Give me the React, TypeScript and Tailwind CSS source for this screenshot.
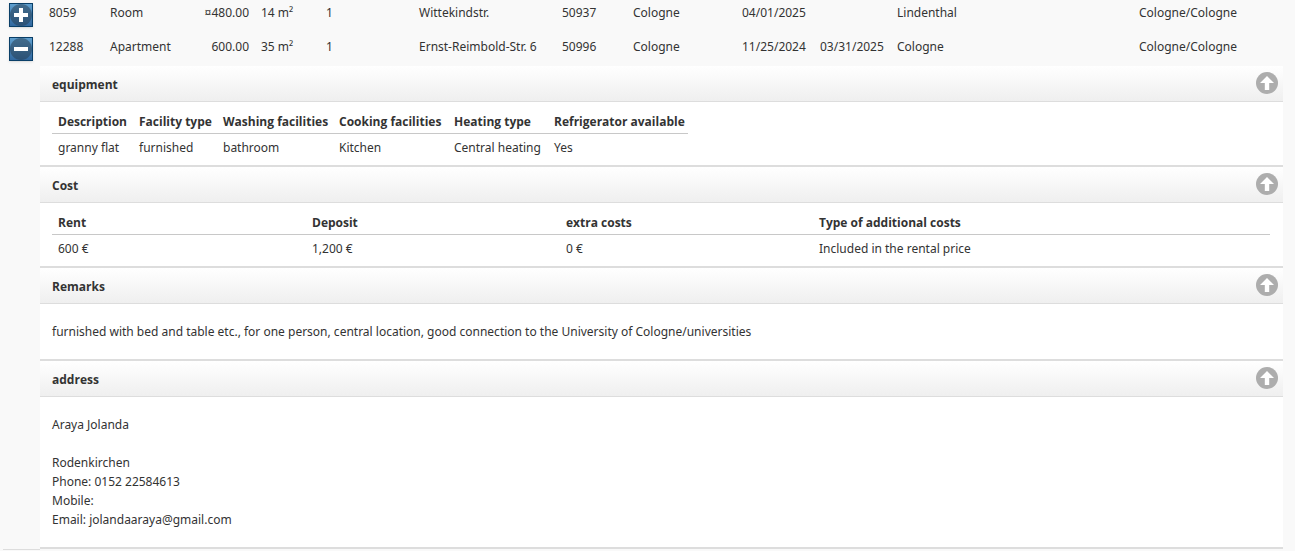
import { Fragment, useState, type ReactNode } from 'react';

interface Offer {
  id: string;
  type: string;
  rent: string;
  size: string;
  rooms: string;
  street: string;
  zip: string;
  city: string;
  from: string;
  until: string;
  district: string;
  region: string;
}

const OFFERS: Offer[] = [
  {
    id: '8059',
    type: 'Room',
    rent: '¤480.00',
    size: '14 m²',
    rooms: '1',
    street: 'Wittekindstr.',
    zip: '50937',
    city: 'Cologne',
    from: '04/01/2025',
    until: '',
    district: 'Lindenthal',
    region: 'Cologne/Cologne',
  },
  {
    id: '12288',
    type: 'Apartment',
    rent: '600.00',
    size: '35 m²',
    rooms: '1',
    street: 'Ernst-Reimbold-Str. 6',
    zip: '50996',
    city: 'Cologne',
    from: '11/25/2024',
    until: '03/31/2025',
    district: 'Cologne',
    region: 'Cologne/Cologne',
  },
];

const EQUIPMENT = [
  { label: 'Description', value: 'granny flat', width: 'w-[81px]' },
  { label: 'Facility type', value: 'furnished', width: 'w-[84px]' },
  { label: 'Washing facilities', value: 'bathroom', width: 'w-[116px]' },
  { label: 'Cooking facilities', value: 'Kitchen', width: 'w-[115px]' },
  { label: 'Heating type', value: 'Central heating', width: 'w-[100px]' },
  { label: 'Refrigerator available', value: 'Yes', width: 'w-[140px]' },
];

const COSTS = [
  { label: 'Rent', value: '600 €', width: 'w-[254px]' },
  { label: 'Deposit', value: '1,200 €', width: 'w-[254px]' },
  { label: 'extra costs', value: '0 €', width: 'w-[253px]' },
  { label: 'Type of additional costs', value: 'Included in the rental price', width: '' },
];

function ToggleButton({ open, onClick }: { open: boolean; onClick: () => void }) {
  return (
    <button
      type="button"
      onClick={onClick}
      aria-expanded={open}
      aria-label={open ? 'Hide details' : 'Show details'}
      className="block size-6 border border-[#0a3f68] bg-linear-to-b from-[#5f9fce] to-[#31689f] shadow-sm"
    >
      <svg viewBox="0 0 22 22" className="block size-full">
        <circle cx="11" cy="11" r="11" fill="#25394b" fillOpacity="0.5" />
        <path d="M4 9h14v4H4z" fill="#fff" />
        {!open && <path d="M9 4h4v14H9z" fill="#fff" />}
      </svg>
    </button>
  );
}

function Section({ title, children }: { title: string; children: ReactNode }) {
  return (
    <section className="border-b-2 border-[#dddddd] bg-white">
      <header className="flex h-9 items-start justify-between border-b border-[#dddddd] bg-linear-to-b from-white to-[#efefef] pr-[5px] pl-3">
        <h2 className="pt-[10px] font-['Open_Sans','Noto_Sans',sans-serif] font-bold">{title}</h2>
        <button
          type="button"
          aria-label="Back to top"
          onClick={() => window.scrollTo(0, 0)}
          className="mt-1.5"
        >
          <svg viewBox="0 0 22 22" className="block size-[22px]">
            <circle cx="11" cy="11" r="11" fill="#adadad" />
            <path d="M11 4l7 7h-4.8v7H8.8v-7H4z" fill="#fff" />
          </svg>
        </button>
      </header>
      {children}
    </section>
  );
}

function DetailTable({
  items,
  className,
}: {
  items: { label: string; value: string; width: string }[];
  className: string;
}) {
  return (
    <div className="pt-2 pr-[13px] pb-1 pl-3">
      <table className={`table-fixed border-collapse text-left whitespace-nowrap ${className}`}>
        <thead>
          <tr className="border-b border-[#c8c8c8] font-['Open_Sans','Noto_Sans',sans-serif]">
            {items.map((item) => (
              <th key={item.label} className={`px-1.5 pt-[3px] pb-0.5 font-bold ${item.width}`}>
                {item.label}
              </th>
            ))}
          </tr>
        </thead>
        <tbody>
          <tr>
            {items.map((item) => (
              <td key={item.label} className="px-1.5 pt-[5px] pb-1">
                {item.value}
              </td>
            ))}
          </tr>
        </tbody>
      </table>
    </div>
  );
}

function OfferDetails() {
  return (
    <>
      <Section title="equipment">
        <DetailTable items={EQUIPMENT} className="w-[636px]" />
      </Section>
      <Section title="Cost">
        <DetailTable items={COSTS} className="w-full" />
      </Section>
      <Section title="Remarks">
        <p className="px-3 py-[18px] leading-[19px]">
          furnished with bed and table etc., for one person, central location, good connection to the University of
          Cologne/universities
        </p>
      </Section>
      <Section title="address">
        <address className="px-3 py-[18px] leading-[19px] not-italic">
          Araya Jolanda
          <br />
          <br />
          Rodenkirchen
          <br />
          Phone: 0152 22584613
          <br />
          Mobile:
          <br />
          Email: jolandaaraya@gmail.com
        </address>
      </Section>
    </>
  );
}

export default function App() {
  const [openId, setOpenId] = useState<string | null>('12288');

  return (
    <main className="min-h-screen overflow-hidden bg-[#f9f9f9] pr-3 pl-[3px] font-['Noto_Sans','Open_Sans',sans-serif] text-[12px] leading-[18px] text-[#333333]">
      <table className="-mt-0.5 w-full table-fixed border-collapse text-left whitespace-nowrap">
        <colgroup>
          <col className="w-[37px]" />
          <col className="w-16" />
          <col className="w-[94px]" />
          <col className="w-[57px]" />
          <col className="w-[65px]" />
          <col className="w-[93px]" />
          <col className="w-[143px]" />
          <col className="w-[71px]" />
          <col className="w-[109px]" />
          <col className="w-[78px]" />
          <col className="w-[77px]" />
          <col className="w-[242px]" />
          <col />
        </colgroup>
        <tbody>
          {OFFERS.map((offer) => {
            const open = offer.id === openId;
            return (
              <Fragment key={offer.id}>
                <tr className="h-[34px] align-top *:px-1.5 *:pt-1.5">
                  <td>
                    <div className="-mt-px">
                      <ToggleButton open={open} onClick={() => setOpenId(open ? null : offer.id)} />
                    </div>
                  </td>
                  <td>
                    <span className="pl-[3px]">{offer.id}</span>
                  </td>
                  <td>{offer.type}</td>
                  <td className="text-right">{offer.rent}</td>
                  <td>{offer.size}</td>
                  <td>{offer.rooms}</td>
                  <td>{offer.street}</td>
                  <td>{offer.zip}</td>
                  <td>{offer.city}</td>
                  <td>{offer.from}</td>
                  <td>{offer.until}</td>
                  <td>{offer.district}</td>
                  <td>{offer.region}</td>
                </tr>
                {open && (
                  <tr>
                    <td className="border-b border-[#dddddd]" />
                    <td colSpan={12} className="p-0">
                      <OfferDetails />
                    </td>
                  </tr>
                )}
              </Fragment>
            );
          })}
        </tbody>
      </table>
    </main>
  );
}
